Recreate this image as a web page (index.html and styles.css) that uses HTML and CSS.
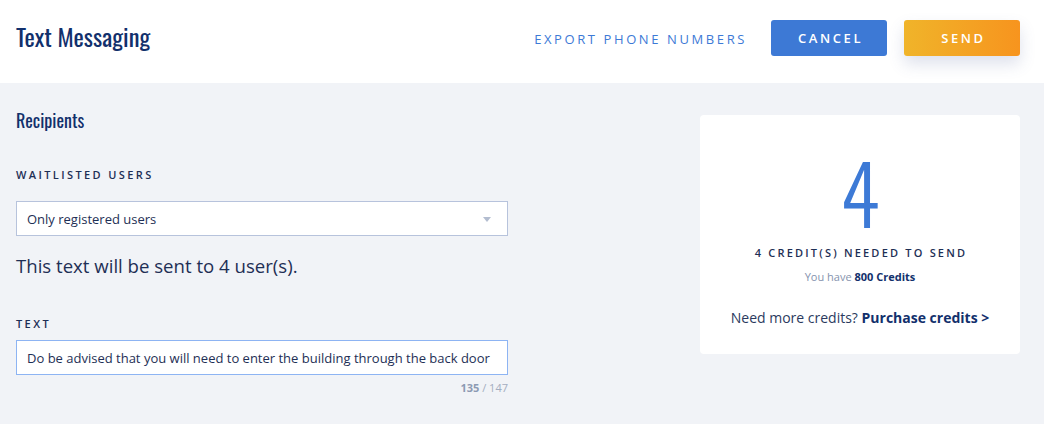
FILE: index.html
```html
<!DOCTYPE html>
<html lang="en">
<head>
<meta charset="utf-8">
<title>Text Messaging</title>
<link rel="stylesheet" href="styles.css">
</head>
<body>
<header class="topbar">
  <h1 class="page-title">Text Messaging</h1>
  <div class="actions">
    <a class="link-btn">EXPORT PHONE NUMBERS</a>
    <button class="btn btn-cancel">CANCEL</button>
    <button class="btn btn-send">SEND</button>
  </div>
</header>
<main class="content">
  <section class="form-col">
    <h2 class="section-title">Recipients</h2>
    <div class="field">
      <div class="label">WAITLISTED USERS</div>
      <div class="select">
        <span>Only registered users</span>
        <svg class="caret" width="8" height="5" viewBox="0 0 8 5"><path d="M0 0h8L4 5z" fill="#b3bdd0"/></svg>
      </div>
    </div>
    <p class="summary">This text will be sent to 4 user(s).</p>
    <div class="field field-text">
      <div class="label">TEXT</div>
      <div class="input">Do be advised that you will need to enter the building through the back door</div>
      <div class="counter"><b>135</b> / 147</div>
    </div>
  </section>
  <aside class="card">
    <div class="big-num">4</div>
    <div class="needed">4 CREDIT(S) NEEDED TO SEND</div>
    <div class="have">You have <b>800 Credits</b></div>
    <div class="more">Need more credits? <b>Purchase credits &gt;</b></div>
  </aside>
</main>
</body>
</html>
```
FILE: styles.css
```css
* { box-sizing: border-box; }
html, body { margin: 0; padding: 0; }
body {
  background: #f1f3f7;
  font-family: "Open Sans", "Liberation Sans", sans-serif;
  color: #1e2f55;
  width: 1044px;
  height: 424px;
  overflow: hidden;
}
.topbar {
  height: 83px;
  background: #fff;
  display: flex;
  align-items: flex-start;
  justify-content: space-between;
  padding: 20px 24px 0 16px;
}
.page-title {
  margin: 0;
  font-family: "Oswald", "Roboto Condensed", "DejaVu Sans Condensed", "DejaVu Sans", sans-serif;
  font-stretch: condensed;
  font-weight: normal;
  font-size: 24.5px;
  line-height: 36px;
  color: #12306c;
  margin-top: -2px;
}
.actions {
  display: flex;
  align-items: center;
}
.link-btn {
  font-size: 13px;
  letter-spacing: 2.6px;
  color: #3d7ad6;
  margin-right: 24px;
  padding-top: 1px;
}
.btn {
  width: 116px;
  height: 36px;
  border: none;
  border-radius: 3px;
  color: #fff;
  font-family: "Open Sans", sans-serif;
  font-weight: 600;
  font-size: 13px;
  letter-spacing: 2.6px;
  padding: 0 0 0 3px;
}
.btn-cancel { background: #3d79d5; }
.btn-send {
  margin-left: 17px;
  background: linear-gradient(90deg, #f0b42a, #f7941e);
  box-shadow: 0 8px 16px rgba(70, 90, 150, 0.18);
}
.content {
  display: flex;
  justify-content: space-between;
  align-items: flex-start;
  padding: 32px 24px 0 16px;
}
.form-col {
  width: 492px;
}
.section-title {
  margin: -6px 0 0;
  font-family: "Oswald", "Roboto Condensed", "DejaVu Sans Condensed", "DejaVu Sans", sans-serif;
  font-stretch: condensed;
  font-weight: normal;
  font-size: 18px;
  line-height: 22px;
  color: #12306c;
}
.field { margin-top: 37px; }
.label {
  font-size: 11px;
  font-weight: 600;
  letter-spacing: 2.4px;
  line-height: 14px;
  color: #1e2f55;
}
.select {
  margin-top: 19px;
  height: 35px;
  background: #fff;
  border: 1px solid #b7c3dc;
  display: flex;
  align-items: center;
  justify-content: space-between;
  padding: 0 16px 0 10px;
  font-size: 13px;
  color: #1e2f55;
}
.caret { margin-top: 2px; }
.summary {
  margin: 17px 0 0;
  font-size: 18.6px;
  line-height: 26px;
  color: #1e2f55;
}
.field-text { margin-top: 38px; }
.input {
  margin-top: 9px;
  height: 35px;
  background: #fff;
  border: 1px solid #8db4f3;
  display: flex;
  align-items: center;
  padding: 0 10px;
  font-size: 13px;
  color: #1e2f55;
  white-space: nowrap;
  overflow: hidden;
}
.counter {
  text-align: right;
  font-size: 11px;
  color: #a3adc0;
  margin-top: 5px;
}
.counter b { color: #8c9ab3; font-weight: 700; }
.card {
  width: 320px;
  height: 239px;
  background: #fff;
  border-radius: 4px;
  display: flex;
  flex-direction: column;
  align-items: center;
  padding-top: 28px;
}
.big-num {
  font-family: "Oswald", "Roboto Condensed", "DejaVu Sans Condensed", sans-serif;
  font-stretch: condensed;
  font-weight: 300;
  font-size: 82px;
  line-height: 96px;
  color: #3d7ad6;
  height: 96px;
}
.needed {
  font-size: 11px;
  font-weight: 600;
  letter-spacing: 2.2px;
  color: #1e2f55;
  margin-top: 6px;
  padding-left: 2px;
}
.have {
  font-size: 11px;
  color: #8593ae;
  margin-top: 9px;
}
.have b { color: #12306c; font-weight: 700; }
.more {
  font-size: 14px;
  color: #2b3a5e;
  margin-top: 24px;
}
.more b { color: #12306c; font-weight: 700; }
```
